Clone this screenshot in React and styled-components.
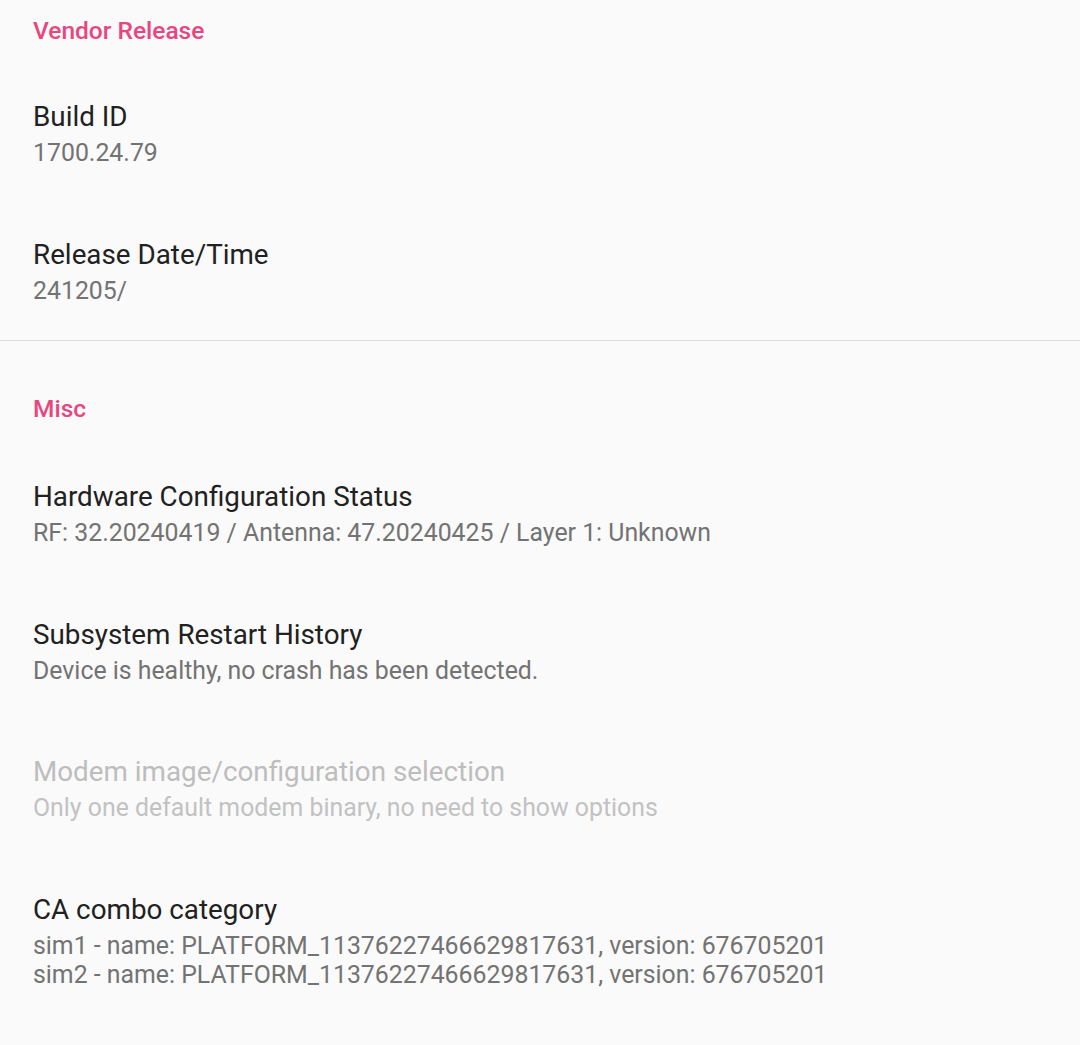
import React from "react";
import styled, { createGlobalStyle } from "styled-components";

const GlobalStyle = createGlobalStyle`
  html, body {
    margin: 0;
    padding: 0;
    background: #fafafa;
  }
  body {
    font-family: Roboto, "Noto Sans", "Liberation Sans", sans-serif;
  }
`;

const sections = [
  {
    title: "Vendor Release",
    first: true,
    items: [
      { title: "Build ID", summary: ["1700.24.79"] },
      { title: "Release Date/Time", summary: ["241205/"] },
    ],
  },
  {
    title: "Misc",
    items: [
      {
        title: "Hardware Configuration Status",
        summary: ["RF: 32.20240419 / Antenna: 47.20240425 / Layer 1: Unknown"],
      },
      {
        title: "Subsystem Restart History",
        summary: ["Device is healthy, no crash has been detected."],
      },
      {
        title: "Modem image/configuration selection",
        summary: ["Only one default modem binary, no need to show options"],
        disabled: true,
      },
      {
        title: "CA combo category",
        summary: [
          "sim1 - name: PLATFORM_11376227466629817631, version: 676705201",
          "sim2 - name: PLATFORM_11376227466629817631, version: 676705201",
        ],
      },
    ],
  },
];

function App() {
  return (
    <Screen>
      <GlobalStyle />
      {sections.map((section, i) => (
        <Section key={section.title} $divider={i > 0}>
          <Category $first={section.first}>{section.title}</Category>
          {section.items.map((item) => (
            <Pref key={item.title} $disabled={item.disabled}>
              <div className="title">{item.title}</div>
              <div className="summary">
                {item.summary.map((line) => (
                  <div key={line}>{line}</div>
                ))}
              </div>
            </Pref>
          ))}
        </Section>
      ))}
    </Screen>
  );
}

const Screen = styled.div`
  width: 1080px;
  min-height: 1045px;
  background: #fafafa;
`;

const Section = styled.section`
  border-top: ${(p) => (p.$divider ? "1px solid #dadada" : "none")};
`;

const Category = styled.div`
  padding: ${(p) => (p.$first ? "17px 33px 20px" : "54px 33px 22px")};
  font-size: 24.5px;
  line-height: 28px;
  font-weight: 500;
  color: #e9467f;
`;

const Pref = styled.div`
  padding: 34px 33px 35px;
  display: flex;
  flex-direction: column;

  .title {
    font-size: 27.8px;
    line-height: 36px;
    color: ${(p) => (p.$disabled ? "#bdbdbd" : "#212121")};
  }

  .summary {
    margin-top: 3px;
    font-size: 24.85px;
    line-height: 29.5px;
    color: ${(p) => (p.$disabled ? "#c2c2c2" : "#737373")};
  }
`;

export default App;
